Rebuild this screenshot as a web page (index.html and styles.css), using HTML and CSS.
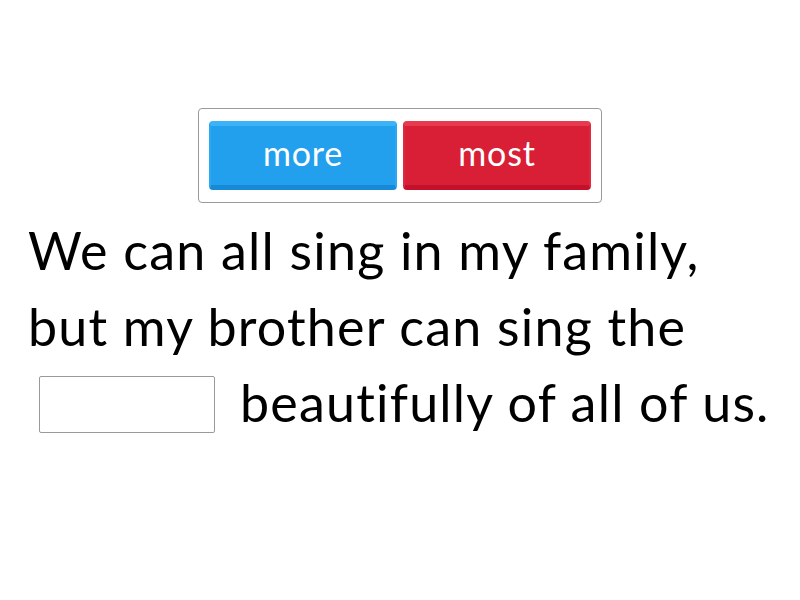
FILE: index.html
```html
<!DOCTYPE html>
<html>
<head>
<meta charset="utf-8">
<link rel="stylesheet" href="styles.css">
</head>
<body>
<div class="page">
  <div class="tiles">
    <div class="tile tile-blue">more</div>
    <div class="tile tile-red">most</div>
  </div>
  <div class="sentence">
    <div class="line">We can all sing in my family,</div>
    <div class="line">but my brother can sing the</div>
    <div class="line"><span class="gap"></span>beautifully of all of us.</div>
  </div>
</div>
</body>
</html>
```
FILE: styles.css
```css
html, body {
  margin: 0;
  padding: 0;
  background: #fff;
}
.page {
  width: 800px;
  height: 600px;
  font-family: "Lato", "Liberation Sans", sans-serif;
  font-variant-ligatures: none;
  padding-top: 108px;
  box-sizing: border-box;
}
.tiles {
  width: 404px;
  height: 95px;
  margin: 0 auto;
  box-sizing: border-box;
  border: 1px solid #9a9a9a;
  border-radius: 4px;
  padding: 12px 10px 0 10px;
  display: flex;
  gap: 6px;
}
.tile {
  width: 188px;
  height: 69px;
  box-sizing: border-box;
  border-radius: 4px;
  color: #fff;
  font-size: 34px;
  letter-spacing: 0.8px;
  display: flex;
  align-items: center;
  justify-content: center;
  padding-bottom: 6px;
}
.tile-blue {
  background: #22a0ee;
  border-top: 5px solid #3cb3f7;
  border-bottom: 5px solid #168ad6;
  border-left: 2px solid #2aa8f3;
  border-right: 2px solid #2aa8f3;
}
.tile-red {
  background: #d81f36;
  border-top: 5px solid #e83a4f;
  border-bottom: 5px solid #c4102a;
  border-left: 2px solid #de2a40;
  border-right: 2px solid #de2a40;
}
.sentence {
  padding-left: 28px;
  margin-top: 9px;
  font-size: 52px;
  line-height: 76px;
  letter-spacing: 1.2px;
  color: #000;
}
.line {
  white-space: nowrap;
}
.gap {
  display: inline-block;
  width: 176px;
  height: 57px;
  box-sizing: border-box;
  border: 1px solid #9a9a9a;
  border-radius: 2px;
  vertical-align: -11px;
  margin-left: 11px;
  margin-right: 25px;
}
```
